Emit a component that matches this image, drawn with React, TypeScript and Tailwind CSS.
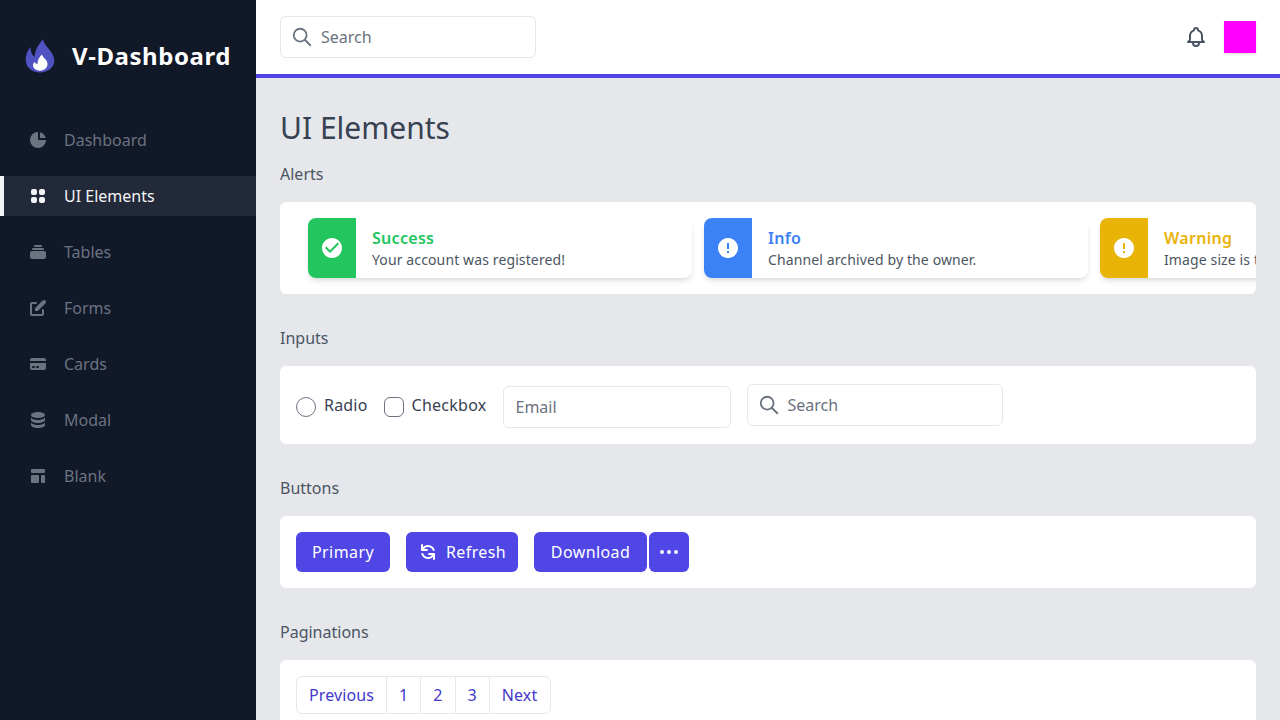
import React from "react";

const F = "font-['Noto_Sans',sans-serif]";

function Solid({ d, className = "" }: { d: string; className?: string }) {
  return (
    <svg viewBox="0 0 20 20" fill="currentColor" className={className}>
      <path fillRule="evenodd" clipRule="evenodd" d={d} />
    </svg>
  );
}

const nav = [
  { label: "Dashboard", d: "M2 10a8 8 0 018-8v8h8a8 8 0 11-16 0zM12 2.252A8.014 8.014 0 0117.748 8H12V2.252z" },
  { label: "UI Elements", active: true, d: "M5 3a2 2 0 00-2 2v2a2 2 0 002 2h2a2 2 0 002-2V5a2 2 0 00-2-2H5zM5 11a2 2 0 00-2 2v2a2 2 0 002 2h2a2 2 0 002-2v-2a2 2 0 00-2-2H5zM11 5a2 2 0 012-2h2a2 2 0 012 2v2a2 2 0 01-2 2h-2a2 2 0 01-2-2V5zM11 13a2 2 0 012-2h2a2 2 0 012 2v2a2 2 0 01-2 2h-2a2 2 0 01-2-2v-2z" },
  { label: "Tables", d: "M7 3a1 1 0 000 2h6a1 1 0 100-2H7zM4 7a1 1 0 011-1h10a1 1 0 110 2H5a1 1 0 01-1-1zM2 11a2 2 0 012-2h12a2 2 0 012 2v4a2 2 0 01-2 2H4a2 2 0 01-2-2v-4z" },
  { label: "Forms", d: "M17.414 2.586a2 2 0 00-2.828 0L7 10.172V13h2.828l7.586-7.586a2 2 0 000-2.828zM2 6a2 2 0 012-2h4a1 1 0 010 2H4v10h10v-4a1 1 0 112 0v4a2 2 0 01-2 2H4a2 2 0 01-2-2V6z" },
  { label: "Cards", d: "M4 4a2 2 0 00-2 2v1h16V6a2 2 0 00-2-2H4zM18 9H2v5a2 2 0 002 2h12a2 2 0 002-2V9zM4 13a1 1 0 011-1h1a1 1 0 110 2H5a1 1 0 01-1-1zm5-1a1 1 0 100 2h1a1 1 0 100-2H9z" },
  { label: "Modal", d: "M3 12v3c0 1.657 3.134 3 7 3s7-1.343 7-3v-3c0 1.657-3.134 3-7 3s-7-1.343-7-3zM3 7v3c0 1.657 3.134 3 7 3s7-1.343 7-3V7c0 1.657-3.134 3-7 3S3 8.657 3 7zM17 5c0 1.657-3.134 3-7 3S3 6.657 3 5s3.134-3 7-3 7 1.343 7 3z" },
  { label: "Blank", d: "M3 4a1 1 0 011-1h12a1 1 0 011 1v2a1 1 0 01-1 1H4a1 1 0 01-1-1V4zM3 10a1 1 0 011-1h6a1 1 0 011 1v6a1 1 0 01-1 1H4a1 1 0 01-1-1v-6zM14 9a1 1 0 00-1 1v6a1 1 0 001 1h2a1 1 0 001-1v-6a1 1 0 00-1-1h-2z" },
];

const SearchBox = ({ className = "" }: { className?: string }) => (
  <div className={`flex h-[42px] w-64 items-center rounded-md border border-[#e5e7eb] pl-[10px] ${className}`}>
    <svg viewBox="0 0 24 24" fill="none" stroke="currentColor" strokeWidth={2} strokeLinecap="round" strokeLinejoin="round" className="h-[22px] w-[22px] text-[#6b7280]">
      <path d="M21 21l-6-6m2-5a7 7 0 11-14 0 7 7 0 0114 0z" />
    </svg>
    <span className="ml-[8px] text-[#6b7280]">Search</span>
  </div>
);

const check = "M20 3.33331C10.8 3.33331 3.33337 10.8 3.33337 20C3.33337 29.2 10.8 36.6666 20 36.6666C29.2 36.6666 36.6667 29.2 36.6667 20C36.6667 10.8 29.2 3.33331 20 3.33331ZM16.6667 28.3333L8.33337 20L10.6834 17.65L16.6667 23.6166L29.3167 10.9666L31.6667 13.3333L16.6667 28.3333Z";
const bang = "M20 3.33331C10.8 3.33331 3.33337 10.8 3.33337 20C3.33337 29.2 10.8 36.6666 20 36.6666C29.2 36.6666 36.6667 29.2 36.6667 20C36.6667 10.8 29.2 3.33331 20 3.33331ZM21.6667 28.3333H18.3334V25H21.6667V28.3333ZM21.6667 21.6666H18.3334V11.6666H21.6667V21.6666Z";

function Alert({ bg, color, title, text, d }: { bg: string; color: string; title: string; text: string; d: string }) {
  return (
    <div className="flex h-[60px] w-[384px] shrink-0 overflow-hidden rounded-lg bg-white shadow-md">
      <div className={`flex w-12 items-center justify-center ${bg}`}>
        <svg viewBox="0 0 40 40" fill="white" className="h-6 w-6"><path d={d} /></svg>
      </div>
      <div className="px-4 py-2">
        <div className={`text-base leading-6 font-semibold tracking-[0.3px] ${color}`}>{title}</div>
        <div className="text-sm leading-5 tracking-[0.12px] whitespace-nowrap text-[#4b5563]">{text}</div>
      </div>
    </div>
  );
}

export default function App() {
  return (
    <div className={`flex h-screen overflow-hidden bg-[#e5e7eb] ${F}`}>
      <aside className="w-64 shrink-0 bg-[#111827]">
        <div className="mt-8 flex h-12 items-center justify-center">
          <svg viewBox="0 0 30 34" className="h-[34px] w-[30px]">
            <path fill="#4f52c0" d="M18 0.5C19 5 22 7.5 25 11.5C28 15.5 29.3 18.5 29.3 21.5C29.3 28.5 23 33.5 15 33.5C7 33.5 0.7 28.5 0.7 20.5C0.7 15.5 3 11 5.5 8C5.5 12 6.5 15.5 9.5 18C10 11 13.5 5 18 0.5Z" />
            <path fill="#fff" d="M17 15.5C17.5 18.5 22.5 20.5 22.5 25C22.5 29 19 31.7 15 31.7C11.5 31.7 8 29.5 8 26.5C8 25 8.6 24 9.4 23C10 24 11 24.8 12.5 25C12.5 21 14.5 17.5 17 15.5Z" />
          </svg>
          <span className="ml-[17px] text-2xl font-bold tracking-[0.55px] text-white">V-Dashboard</span>
        </div>
        <nav className="mt-10">
          {nav.map((n) => (
            <a
              key={n.label}
              className={`mt-4 flex items-center border-l-4 px-6 py-2 ${n.active ? "border-[#f3f4f6] bg-[#222938] text-[#f3f4f6]" : "border-[#111827] text-[#6b7280]"}`}
            >
              <Solid d={n.d} className="h-5 w-5" />
              <span className="mx-4">{n.label}</span>
            </a>
          ))}
        </nav>
      </aside>
      <div className="flex min-w-0 flex-1 flex-col">
        <header className="flex h-[78px] shrink-0 items-center justify-between border-b-4 border-[#4f46e5] bg-white px-6">
          <SearchBox />
          <div className="flex items-center">
            <svg viewBox="0 0 24 24" fill="none" stroke="currentColor" strokeWidth={2} strokeLinecap="round" strokeLinejoin="round" className="h-6 w-6 text-[#4b5563]">
              <path d="M15 17h5l-1.405-1.405A2.032 2.032 0 0118 14.158V11a6.002 6.002 0 00-4-5.659V5a2 2 0 10-4 0v.341C7.67 6.165 6 8.388 6 11v3.159c0 .538-.214 1.055-.595 1.436L4 17h5m6 0v1a3 3 0 11-6 0v-1m6 0H9" />
            </svg>
            <div className="ml-4 h-8 w-8 bg-[#ff00ff] shadow-sm" />
          </div>
        </header>
        <main className="flex-1 overflow-hidden px-6 pt-8">
          <h1 className="text-3xl leading-9 text-[#374151]">UI Elements</h1>
          <section className="mt-4">
            <h2 className="text-base leading-6 text-[#4b5563]">Alerts</h2>
            <div className="mt-4 overflow-hidden rounded-md bg-white">
              <div className="flex gap-3 py-4 pl-7">
                <Alert bg="bg-[#22c55e]" color="text-[#22c55e]" title="Success" text="Your account was registered!" d={check} />
                <Alert bg="bg-[#3b82f6]" color="text-[#3b82f6]" title="Info" text="Channel archived by the owner." d={bang} />
                <Alert bg="bg-[#eab308]" color="text-[#eab308]" title="Warning" text="Image size is too large!" d={bang} />
              </div>
            </div>
          </section>
          <section className="mt-8">
            <h2 className="text-base leading-6 text-[#4b5563]">Inputs</h2>
            <div className="mt-4 flex h-[78px] items-start rounded-md bg-white p-4">
              <label className="mt-[12px] flex items-start text-[#374151]">
                <span className="mt-[3px] h-5 w-5 rounded-full border border-[#6b7280]" />
                <span className="ml-2 -translate-y-px tracking-[0.2px]">Radio</span>
              </label>
              <label className="mt-[12px] ml-4 flex items-start text-[#374151]">
                <span className="mt-[3px] h-5 w-5 rounded-md border border-[#6b7280]" />
                <span className="ml-2 -translate-y-px tracking-[0.25px]">Checkbox</span>
              </label>
              <div className="mt-1 ml-4 flex h-[42px] w-[228px] items-center rounded-md border border-[#e5e7eb] px-3 text-[#6b7280]">Email</div>
              <SearchBox className="mt-[2px] ml-4" />
            </div>
          </section>
          <section className="mt-8">
            <h2 className="text-base leading-6 text-[#4b5563]">Buttons</h2>
            <div className="mt-4 flex rounded-md bg-white p-4 tracking-[0.4px] text-white">
              <div className="flex h-10 w-[94px] items-center justify-center rounded-md bg-[#4f46e5]">Primary</div>
              <div className="ml-4 flex h-10 w-[112px] items-center rounded-md bg-[#4f46e5] pl-3">
                <Solid d="M4 2a1 1 0 011 1v2.101a7.002 7.002 0 0111.601 2.566 1 1 0 11-1.885.666A5.002 5.002 0 005.999 7H9a1 1 0 010 2H4a1 1 0 01-1-1V3a1 1 0 011-1zm.008 9.057a1 1 0 011.276.61A5.002 5.002 0 0014.001 13H11a1 1 0 110-2h5a1 1 0 011 1v5a1 1 0 11-2 0v-2.101a7.002 7.002 0 01-11.601-2.566 1 1 0 01.61-1.276z" className="h-5 w-5" />
                <span className="ml-2">Refresh</span>
              </div>
              <div className="ml-4 flex h-10 w-[113px] items-center justify-center rounded-md bg-[#4f46e5]">Download</div>
              <div className="ml-0.5 flex h-10 w-10 items-center justify-center rounded-md bg-[#4f46e5]">
                <svg viewBox="0 0 24 24" fill="none" stroke="currentColor" strokeWidth={2} strokeLinecap="round" strokeLinejoin="round" className="h-6 w-6">
                  <path d="M5 12h.01M12 12h.01M19 12h.01M6 12a1 1 0 11-2 0 1 1 0 012 0zm7 0a1 1 0 11-2 0 1 1 0 012 0zm7 0a1 1 0 11-2 0 1 1 0 012 0z" />
                </svg>
              </div>
            </div>
          </section>
          <section className="mt-8">
            <h2 className="text-base leading-6 text-[#4b5563]">Paginations</h2>
            <div className="mt-4 rounded-md bg-white p-4">
              <div className="inline-flex h-[38px] divide-x divide-[#e5e7eb] rounded-md border border-[#e5e7eb] tracking-[0.1px] text-[#4338ca]">
                {["Previous", "1", "2", "3"].map((p) => (
                  <div key={p} className="flex items-center px-3">{p}</div>
                ))}
                <div className="flex items-center pr-[13px] pl-3">Next</div>
              </div>
            </div>
          </section>
        </main>
      </div>
    </div>
  );
}
